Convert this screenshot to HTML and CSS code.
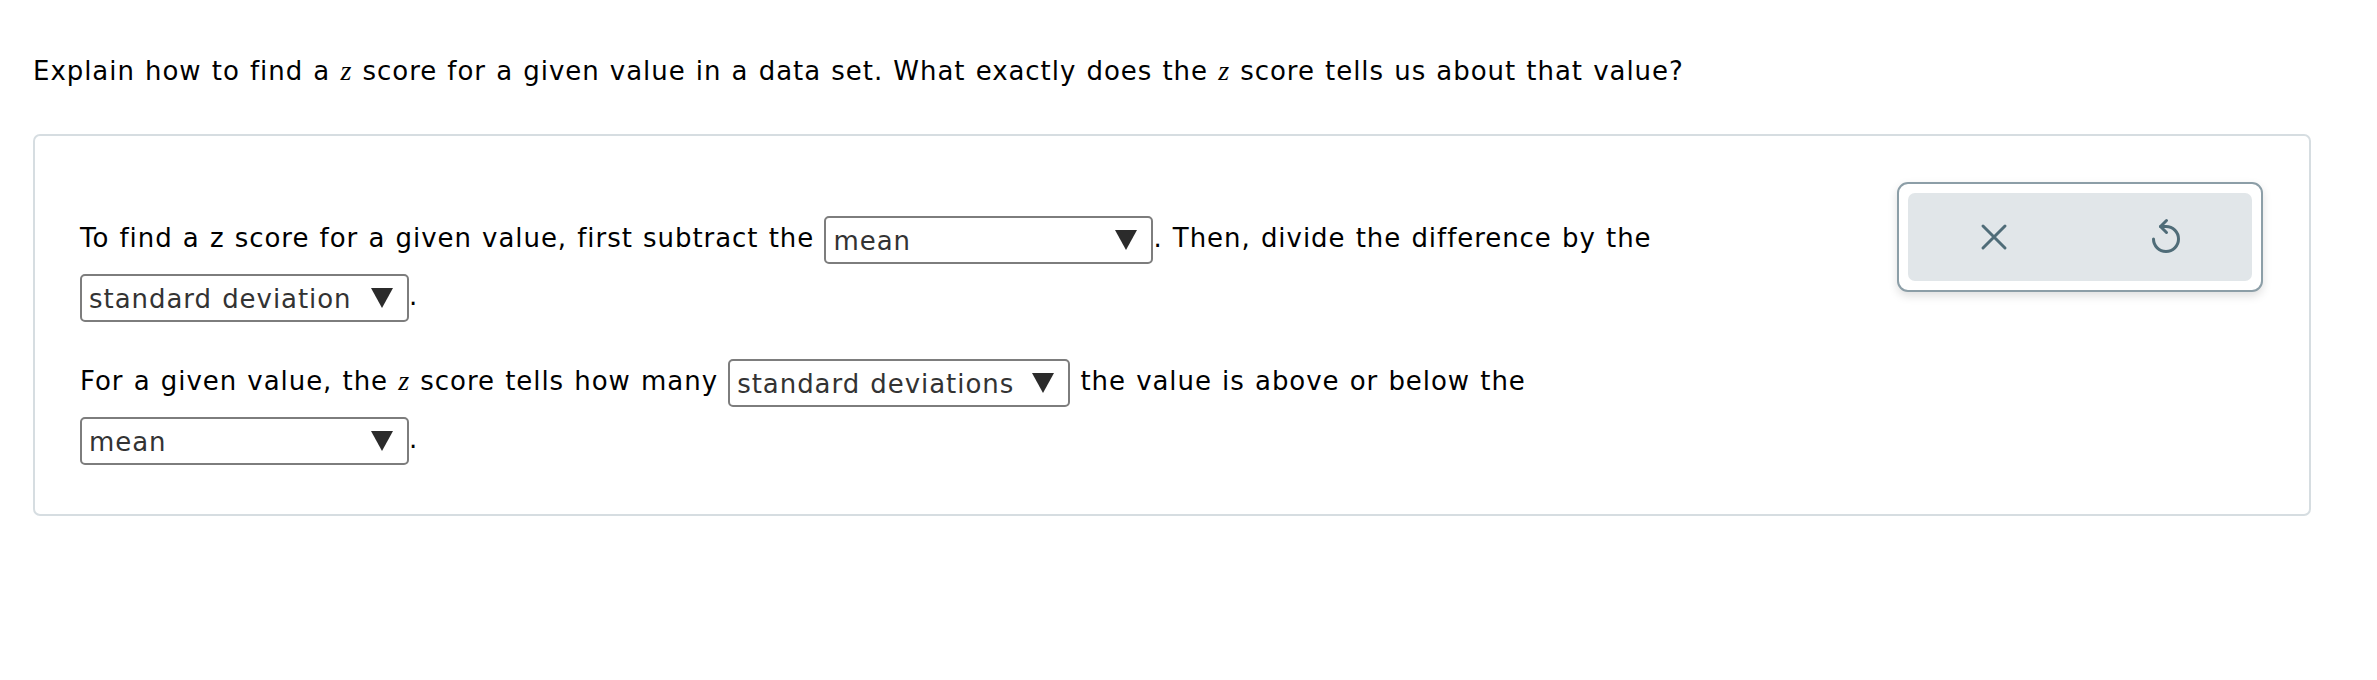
FILE: index.html
```html
<!DOCTYPE html>
<html lang="en">
<head>
<meta charset="utf-8">
<title>z score</title>
<link rel="stylesheet" href="styles.css">
</head>
<body>
<div class="page">
  <p class="question">Explain how to find a <span class="mz">z</span> score for a given value in a data set. What exactly does the <span class="mz">z</span> score tells us about that value?</p>
  <div class="card">
    <div class="answers">
      <p class="para">To find a z score for a given value, first subtract the <span class="sel w-std"><span class="sel-text">mean</span><svg class="caret" viewBox="0 0 22 20" width="22" height="20"><polygon points="0,0 22,0 11,20"/></svg></span>. Then, divide the difference by the<br><span class="sel w-std"><span class="sel-text">standard deviation</span><svg class="caret" viewBox="0 0 22 20" width="22" height="20"><polygon points="0,0 22,0 11,20"/></svg></span>.</p>
      <p class="para">For a given value, the <span class="mz">z</span> score tells how many <span class="sel w-wide"><span class="sel-text">standard deviations</span><svg class="caret" viewBox="0 0 22 20" width="22" height="20"><polygon points="0,0 22,0 11,20"/></svg></span> the value is above or below the<br><span class="sel w-std"><span class="sel-text">mean</span><svg class="caret" viewBox="0 0 22 20" width="22" height="20"><polygon points="0,0 22,0 11,20"/></svg></span>.</p>
    </div>
    <div class="tools">
      <div class="tools-inner">
        <button class="tool" type="button" aria-label="Clear">
          <svg viewBox="0 0 28 28" width="28" height="28"><path d="M3 3 L25 25 M25 3 L3 25" fill="none" stroke="#4f6c78" stroke-width="3" stroke-linecap="round"/></svg>
        </button>
        <button class="tool" type="button" aria-label="Undo">
          <svg viewBox="0 0 36 40" width="36" height="40"><path d="M12.5 9.5 H18 A12.5 12.5 0 1 1 5.5 22" fill="none" stroke="#4f6c78" stroke-width="3" stroke-linecap="round" stroke-linejoin="round"/><path d="M18.5 3.5 L12.5 9.5 L18.5 15.5" fill="none" stroke="#4f6c78" stroke-width="3" stroke-linecap="round" stroke-linejoin="round"/></svg>
        </button>
      </div>
    </div>
  </div>
</div>
</body>
</html>
```

FILE: styles.css
```css
* { box-sizing: border-box; }

html, body {
  margin: 0;
  padding: 0;
  background: #ffffff;
}

body {
  font-family: "DejaVu Sans", Verdana, sans-serif;
  font-size: 26px;
  letter-spacing: 0.95px;
  word-spacing: 1px;
  color: #000000;
}

.page {
  padding: 53px 0 0 33px;
}

.question {
  margin: 0 0 45px 0;
  line-height: 36px;
  white-space: nowrap;
}

.mz {
  font-family: "Liberation Serif", "Times New Roman", serif;
  font-style: italic;
  font-size: 28px;
}

.card {
  width: 2278px;
  border: 2px solid #d6dde1;
  border-radius: 7px;
  padding: 46px 46px 46px 45px;
  display: flex;
  align-items: flex-start;
}

.answers {
  flex: 1;
}

.para {
  margin: 27px 0 0 0;
  line-height: 58px;
  white-space: nowrap;
}

.sel {
  display: inline-flex;
  align-items: center;
  justify-content: space-between;
  height: 48px;
  border: 2px solid #7d7d7d;
  border-radius: 5px;
  padding: 0 14px 0 7px;
  vertical-align: middle;
  color: #333333;
  background: #ffffff;
  line-height: 1;
}

.sel-text {
  padding-top: 3px;
}

.w-std { width: 329px; }
.w-wide { width: 342px; }

.caret {
  display: block;
  fill: #2b2b2b;
  margin-left: 12px;
  flex-shrink: 0;
}

.tools {
  width: 366px;
  border: 2px solid #8c9ea7;
  border-radius: 11px;
  padding: 9px;
  background: #ffffff;
  box-shadow: 0 4px 10px rgba(0, 0, 0, 0.13);
}

.tools-inner {
  display: flex;
  background: #e1e6e9;
  border-radius: 7px;
  height: 88px;
}

.tool {
  flex: 1;
  display: flex;
  align-items: center;
  justify-content: center;
  background: transparent;
  border: 0;
  padding: 0;
  margin: 0;
  cursor: pointer;
}
```
